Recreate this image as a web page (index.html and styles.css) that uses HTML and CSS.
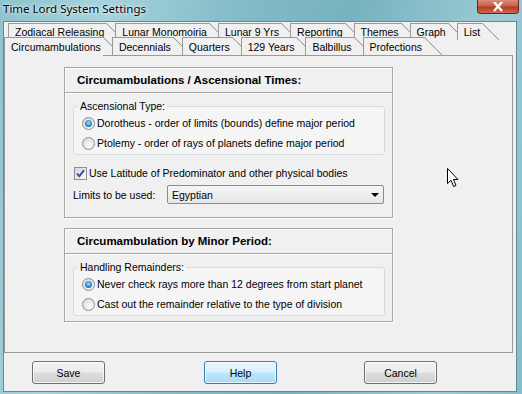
FILE: index.html
```html
<!DOCTYPE html>
<html lang="en">
<head>
  <meta charset="UTF-8">
  <title>Time Lord System Settings</title>
  <link rel="stylesheet" href="styles.css">
</head>
<body>
  <div class="window">
    <div class="titlebar">
      <span class="title">Time Lord System Settings</span>
      <span class="close">
        <svg width="14" height="10" viewBox="0 0 14 10"><path d="M3 0 L11 9 M11 0 L3 9" stroke="#fff" stroke-width="2.4" fill="none"/></svg>
      </span>
    </div>

    <div class="client">
      <div class="tabs">
        <div class="tab-row back">
          <span class="tab">Zodiacal Releasing</span>
          <span class="tab">Lunar Monomoiria</span>
          <span class="tab">Lunar 9 Yrs</span>
          <span class="tab">Reporting</span>
          <span class="tab">Themes</span>
          <span class="tab">Graph</span>
          <span class="tab">List</span>
        </div>
        <div class="tab-row front">
          <span class="tab active">Circumambulations</span>
          <span class="tab">Decennials</span>
          <span class="tab">Quarters</span>
          <span class="tab">129 Years</span>
          <span class="tab">Balbillus</span>
          <span class="tab">Profections</span>
        </div>
      </div>

      <div class="panel">
        <div class="box">
          <div class="box-head">Circumambulations / Ascensional Times:</div>
          <div class="box-body">
            <fieldset class="group">
              <legend>Ascensional Type:</legend>
              <div class="option"><span class="radio checked"></span>Dorotheus - order of limits (bounds) define major period</div>
              <div class="option"><span class="radio"></span>Ptolemy - order of rays of planets define major period</div>
            </fieldset>
            <div class="check-row">
              <span class="checkbox">
                <svg width="11" height="11" viewBox="0 0 11 11"><path d="M2 5.5 L4.3 8.2 L9 2.2" stroke="#2d4f9e" stroke-width="1.9" fill="none"/></svg>
              </span>
              Use Latitude of Predominator and other physical bodies
            </div>
            <div class="field-row">
              <span class="field-label">Limits to be used:</span>
              <div class="combo">Egyptian<span class="arrow"></span></div>
            </div>
          </div>
        </div>

        <div class="box">
          <div class="box-head">Circumambulation by Minor Period:</div>
          <div class="box-body">
            <fieldset class="group">
              <legend>Handling Remainders:</legend>
              <div class="option"><span class="radio checked"></span>Never check rays more than 12 degrees from start planet</div>
              <div class="option"><span class="radio"></span>Cast out the remainder relative to the type of division</div>
            </fieldset>
          </div>
        </div>
      </div>

      <div class="buttons">
        <button class="btn">Save</button>
        <button class="btn focus help">Help</button>
        <button class="btn cancel">Cancel</button>
      </div>
    </div>

    <svg class="cursor" width="13" height="20" viewBox="0 0 13 20"><path d="M0.5 0.5 L0.5 15.5 L4 12.2 L6.6 18.5 L9 17.5 L6.5 11.5 L11 11.5 Z" fill="#fff" stroke="#000" stroke-width="1" stroke-linejoin="round"/></svg>
  </div>
</body>
</html>
```

FILE: styles.css
```css
body {
  margin: 0;
  font-family: "Liberation Sans", Arial, sans-serif;
  font-size: 10.5px;
  color: #000;
}
.window {
  position: relative;
  width: 522px;
  height: 394px;
  overflow: hidden;
  background: linear-gradient(100deg, #8ec2ce 0%, #a6d3dc 18%, #84bcc8 40%, #76b2bf 60%, #9ccbd5 85%, #86bdc9 100%);
}
.titlebar {
  height: 22px;
  display: flex;
  justify-content: space-between;
  align-items: flex-start;
}
.title {
  font-family: "Noto Sans", sans-serif;
  font-size: 11.5px;
  line-height: 18px;
  padding-left: 3px;
  text-shadow: 0 0 5px rgba(255,255,255,0.9), 0 0 2px rgba(255,255,255,0.9);
}
.close {
  width: 42px;
  height: 14px;
  margin-right: 3px;
  box-sizing: border-box;
  border: 1px solid #6b2418;
  border-top: none;
  border-radius: 0 0 4px 4px;
  background: linear-gradient(#d9907d, #c9604a 45%, #b63a22 55%, #cf6b4e);
  display: flex;
  justify-content: center;
  align-items: center;
}
.client {
  margin: 0 6px 0 4px;
  height: 369px;
  padding-top: 1px;
  box-sizing: border-box;
  background: #f0f0f0;
  box-shadow: 0 0 0 1px #5f8c9b;
}

/* tabs */
.tab-row {
  display: flex;
  height: 14px;
}
.tab-row.back {
  padding-left: 4px;
}
.tab-row.front {
  height: 18px;
}
.tab {
  position: relative;
  height: 16px;
  line-height: 16px;
  padding: 0 2px 0 6px;
  margin-right: 9px;
  border-top: 1px solid #9a9a9a;
  border-left: 1px solid #9a9a9a;
  background: #f0f0f0;
  white-space: nowrap;
}
.tab::after {
  content: "";
  position: absolute;
  top: -1px;
  left: 100%;
  width: 17px;
  height: 17px;
  background: linear-gradient(to top right, #f0f0f0 calc(50% - 0.8px), #9a9a9a 50%, transparent calc(50% + 0.8px));
}
.front .tab {
  height: 16px;
  padding-top: 1px;
}
.front .tab::after {
  width: 18px;
  height: 18px;
}
.front .tab.active {
  height: 17px;
  margin-bottom: -1px;
}

/* panel */
.panel {
  height: 298px;
  box-sizing: border-box;
  margin-right: 3px;
  border: 1px solid #9a9a9a;
  padding: 11px 0 0 59px;
}
.box {
  width: 329px;
  box-sizing: border-box;
  border: 1px solid #a5a5a5;
  box-shadow: inset 1px 1px 0 #fff, 1px 1px 0 #fff;
}
.box + .box {
  margin-top: 10px;
}
.box-head {
  height: 24px;
  line-height: 24px;
  padding-left: 12px;
  font-weight: bold;
  font-size: 11.5px;
  border-bottom: 1px solid #a5a5a5;
  box-shadow: 0 1px 0 #fff;
}
.box-body {
  padding: 7px 7px 5px 8px;
}
.group {
  margin: 0;
  padding: 0 4px 1px 4px;
  border: 1px solid #d3dbe0;
  border-radius: 3px;
  background: #f5f5f5;
}
.group legend {
  padding: 0 2px;
  line-height: 13px;
}
.option {
  display: flex;
  align-items: center;
  height: 20px;
}
.radio {
  position: relative;
  width: 13px;
  height: 13px;
  box-sizing: border-box;
  margin: 0 2px 0 4px;
  border: 1px solid #8d8d8d;
  border-radius: 50%;
  background: radial-gradient(circle at 60% 65%, #fbfbfb, #dcdcdc 80%);
}
.radio.checked::after {
  content: "";
  position: absolute;
  inset: 2px;
  border-radius: 50%;
  background: radial-gradient(circle at 50% 40%, #9be0fb, #2a8fc9 55%, #0c4d78);
}
.check-row {
  display: flex;
  align-items: center;
  height: 20px;
  margin-top: 8px;
}
.checkbox {
  width: 13px;
  height: 13px;
  box-sizing: border-box;
  margin: 0 2px 0 1px;
  border: 1px solid #8e8f8f;
  background: linear-gradient(135deg, #d6d6d6, #fbfbfb);
  display: flex;
  align-items: center;
  justify-content: center;
}
.field-row {
  display: flex;
  align-items: center;
  margin: 2px 0 8px;
}
.field-label {
  width: 94px;
}
.combo {
  flex: 1;
  height: 19px;
  box-sizing: border-box;
  margin-right: 1px;
  padding-left: 4px;
  border: 1px solid #8b8b8b;
  border-radius: 2px;
  background: linear-gradient(#f5f5f5, #e6e6e6);
  display: flex;
  align-items: center;
  justify-content: space-between;
}
.arrow {
  margin-right: 4px;
  border-left: 4px solid transparent;
  border-right: 4px solid transparent;
  border-top: 4px solid #000;
}

/* buttons */
.buttons {
  display: flex;
  margin-top: 8px;
  padding-left: 28px;
}
.btn {
  width: 73px;
  height: 23px;
  padding: 0;
  font-family: "Liberation Sans", Arial, sans-serif;
  font-size: 10.5px;
  color: #000;
  border: 1px solid #707070;
  border-radius: 3px;
  background: linear-gradient(#f2f2f2, #ebebeb 48%, #dddddd 52%, #cfcfcf);
  box-shadow: inset 0 0 0 1px rgba(255,255,255,0.75);
}
.btn.focus {
  border-color: #3c7fb1;
  background: linear-gradient(#eaf6fd, #d9f0fc 48%, #bee6fd 52%, #a7d9f5);
}
.btn.help {
  margin-left: 99px;
}
.btn.cancel {
  margin-left: 87px;
}

.cursor {
  position: absolute;
  left: 447px;
  top: 168px;
}
```
